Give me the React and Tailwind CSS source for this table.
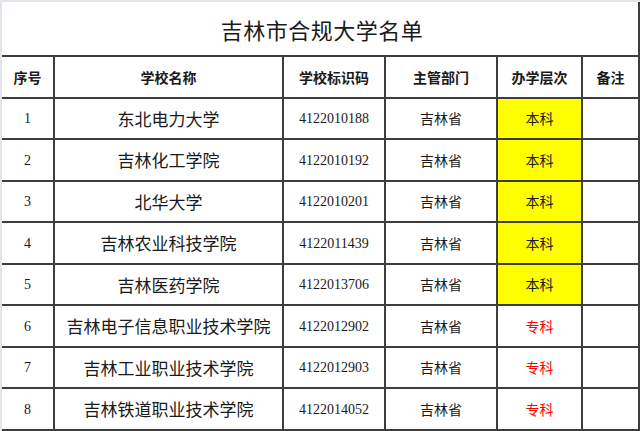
const ROWS = [
  ["1", "东北电力大学", "4122010188", "本科"],
  ["2", "吉林化工学院", "4122010192", "本科"],
  ["3", "北华大学", "4122010201", "本科"],
  ["4", "吉林农业科技学院", "4122011439", "本科"],
  ["5", "吉林医药学院", "4122013706", "本科"],
  ["6", "吉林电子信息职业技术学院", "4122012902", "专科"],
  ["7", "吉林工业职业技术学院", "4122012903", "专科"],
  ["8", "吉林铁道职业技术学院", "4122014052", "专科"],
];

const HEIGHTS = ["h-[41px]", "h-[42px]", "h-[41px]", "h-[42px]", "h-[41px]", "h-[42px]", "h-[41px]", "h-[42px]"];

const sans = "font-['Noto_Sans_CJK_SC','Noto_Sans',sans-serif]";
const serif = "font-['Liberation_Serif','Noto_Sans_CJK_SC',serif]";
const cell = "flex items-center justify-center border-r-2 border-b-2 border-[#3d3d3d]";
const cols = "grid grid-cols-[53px_229px_102px_112px_85px_57px]";

export default function App() {
  return (
    <div className={`w-[640px] h-[431px] bg-white border-t-2 border-l-2 border-[#e4e4ec] text-[#1a1a1a] ${sans}`}>
      <div className="h-[55px] flex items-center justify-center border-r-2 border-b-2 border-[#3d3d3d]">
        <span className="text-[22px] leading-none tracking-[0.5px] pl-[4px]">吉林市合规大学名单</span>
      </div>

      <div className={`${cols} h-[42px] text-[14px] font-bold`}>
        <div className={cell}>序号</div>
        <div className={cell}>学校名称</div>
        <div className={cell}>学校标识码</div>
        <div className={cell}>主管部门</div>
        <div className={cell}>办学层次</div>
        <div className={cell}>备注</div>
      </div>

      {ROWS.map(([no, name, code, level], i) => (
        <div key={no} className={`${cols} ${HEIGHTS[i]}`}>
          <div className={`${cell} ${serif} text-[14px]`}>{no}</div>
          <div className={`${cell} text-[17px]`}>{name}</div>
          <div className={`${cell} ${serif} text-[14px]`}>{code}</div>
          <div className={`${cell} text-[14px]`}>吉林省</div>
          {level === "本科" ? (
            <div className={`${cell} bg-[#ffff00] text-[14px]`}>{level}</div>
          ) : (
            <div className={`${cell} text-[14px] text-[#ff0000]`}>{level}</div>
          )}
          <div className={cell}></div>
        </div>
      ))}
    </div>
  );
}
